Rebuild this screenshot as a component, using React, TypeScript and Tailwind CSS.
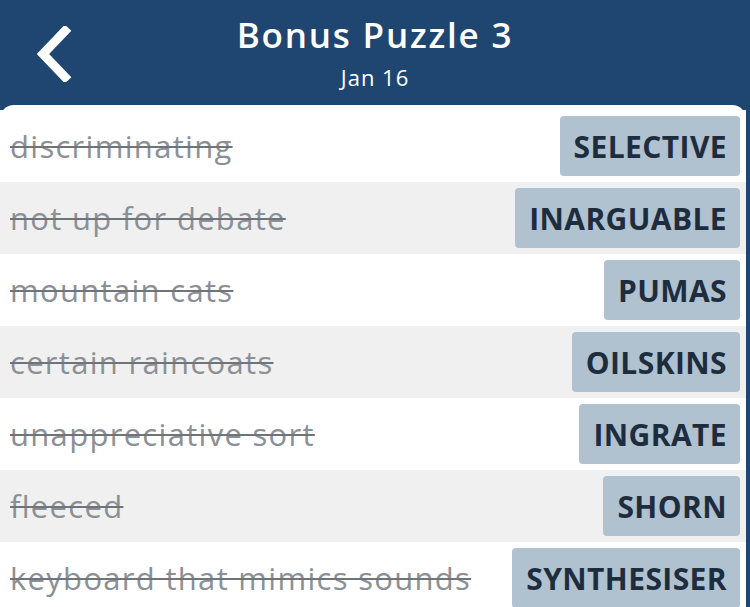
import React from 'react';

type Clue = { clue: string; answer: string };

const clues: Clue[] = [
  { clue: 'discriminating', answer: 'SELECTIVE' },
  { clue: 'not up for debate', answer: 'INARGUABLE' },
  { clue: 'mountain cats', answer: 'PUMAS' },
  { clue: 'certain raincoats', answer: 'OILSKINS' },
  { clue: 'unappreciative sort', answer: 'INGRATE' },
  { clue: 'fleeced', answer: 'SHORN' },
  { clue: 'keyboard that mimics sounds', answer: 'SYNTHESISER' },
];

const App: React.FC = () => {
  return (
    <div
      className="w-[750px] h-[607px] overflow-hidden bg-[#1f4670]"
      style={{ fontFamily: '"Open Sans", Lato, sans-serif' }}
    >
      {/* Header */}
      <header className="relative h-[105px] flex flex-col items-center text-white">
        <button className="absolute left-[34px] top-[26px]" aria-label="Back">
          <svg width="38" height="56" viewBox="0 0 38 56">
            <path
              d="M31 5 L9 28 L31 51"
              fill="none"
              stroke="white"
              strokeWidth="9"
              strokeLinecap="square"
              strokeLinejoin="miter"
            />
          </svg>
        </button>
        <h1 className="mt-[12px] text-[35px] font-semibold leading-[46px] tracking-[1.8px]">
          Bonus Puzzle 3
        </h1>
        <p className="mt-[5px] text-[22px] leading-[28px] tracking-[1px]">Jan 16</p>
      </header>

      {/* Clue list */}
      <div className="mr-[4px] rounded-t-[14px] bg-white pt-[5px] h-[502px]">
        {clues.map((c, i) => (
          <div
            key={c.clue}
            className={`h-[72px] flex items-center justify-between pl-[10px] pr-[6px] ${
              i % 2 === 1 ? 'bg-[#f0f0f0]' : 'bg-white'
            }`}
          >
            <span className="text-[31px] tracking-[1.3px] text-[#8b9097] line-through decoration-[2px] decoration-[#6f747b]">
              {c.clue}
            </span>
            <span className="h-[60px] flex items-center pl-[14px] pr-[13px] rounded-[4px] bg-[#b0c1cf] text-[#1e2d3e] text-[30px] font-bold tracking-[0.4px]">
              {c.answer}
            </span>
          </div>
        ))}
      </div>
    </div>
  );
};

export default App;
